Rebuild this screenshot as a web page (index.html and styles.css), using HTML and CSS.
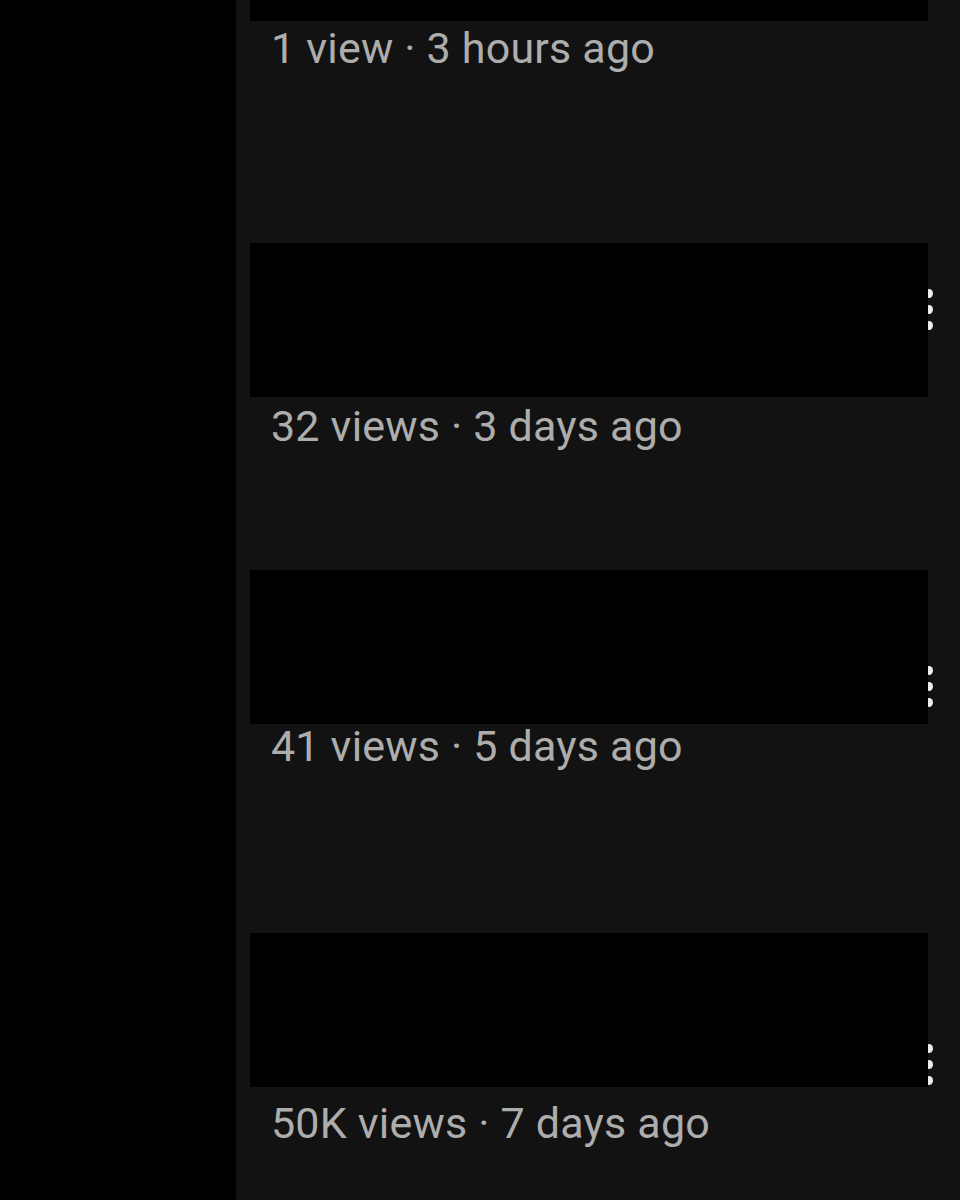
FILE: index.html
```html
<!DOCTYPE html>
<html lang="en">
<head>
    <meta charset="UTF-8">
    <meta name="viewport" content="width=device-width, initial-scale=1.0">
    <title>Videos</title>
    <link rel="stylesheet" href="styles.css">
</head>
<body>
    <div class="page">
        <div class="side"></div>
        <div class="feed">
            <div class="video video1">
                <div class="thumb"></div>
                <div class="meta">1 view · 3 hours ago</div>
            </div>
            <div class="video video2">
                <div class="thumb"></div>
                <span class="more"><i></i><i></i><i></i></span>
                <div class="meta">32 views · 3 days ago</div>
            </div>
            <div class="video video3">
                <div class="thumb"></div>
                <span class="more"><i></i><i></i><i></i></span>
                <div class="meta">41 views · 5 days ago</div>
            </div>
            <div class="video video4">
                <div class="thumb"></div>
                <span class="more"><i></i><i></i><i></i></span>
                <div class="meta">50K views · 7 days ago</div>
            </div>
        </div>
    </div>
</body>
</html>
```

FILE: styles.css
```css
* {
    box-sizing: border-box;
}
body {
    margin: 0;
    background: #000;
    font-family: Roboto, "Noto Sans", sans-serif;
}
.page {
    display: flex;
    width: 960px;
    height: 1200px;
    overflow: hidden;
}
.side {
    width: 236px;
    background: #000;
}
.feed {
    flex: 1;
    background: #121212;
    padding-left: 14px;
    display: flex;
    flex-direction: column;
}

/* one video row */
.video {
    position: relative;
    width: 690px;
}
.thumb {
    position: relative;
    z-index: 1;
    width: 678px;
    height: 154px;
    background: #000;
}
.meta {
    padding-left: 21px;
    font-size: 43px;
    letter-spacing: 0.2px;
    line-height: 50px;
    color: #adadad;
    white-space: nowrap;
}
.more {
    position: absolute;
    left: 675px;
    display: flex;
    flex-direction: column;
    gap: 7px;
}
.more i {
    display: block;
    width: 8px;
    height: 9px;
    border-radius: 50%;
    background: #ededed;
    filter: blur(0.6px);
}

/* rows are not evenly spaced in the feed */
.video1 {
    margin-top: -133px;
}
.video1 .meta {
    margin-top: 2px;
}
.video2 {
    margin-top: 170px;
}
.video2 .meta {
    margin-top: 4px;
}
.video2 .more {
    top: 46px;
}
.video3 {
    margin-top: 119px;
}
.video3 .meta {
    margin-top: -3px;
}
.video3 .more {
    top: 96px;
}
.video4 {
    margin-top: 162px;
}
.video4 .meta {
    margin-top: 11px;
}
.video4 .more {
    top: 111px;
}
```
